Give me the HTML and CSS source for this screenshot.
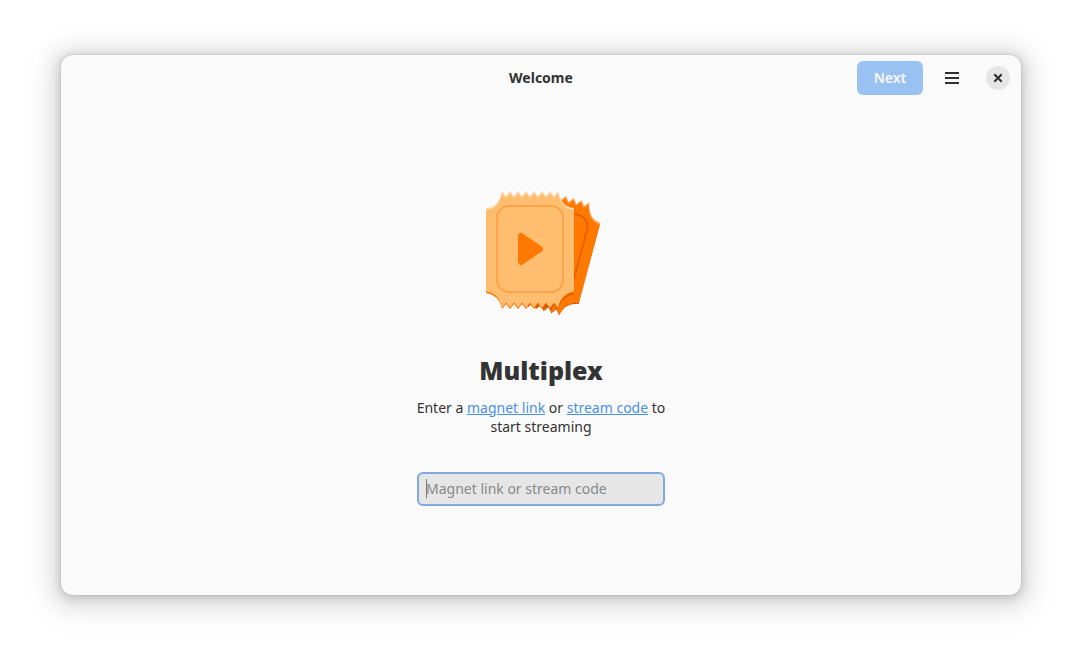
FILE: index.html
```html
<!DOCTYPE html>
<html lang="en">
<head>
<meta charset="utf-8">
<title>Multiplex</title>
<link rel="stylesheet" href="styles.css">
</head>
<body>
<div class="window">
  <header class="headerbar">
    <h2 class="title">Welcome</h2>
    <div class="actions">
      <button class="next" type="button" disabled>Next</button>
      <button class="menu" type="button" aria-label="Main menu">
        <svg width="16" height="16" viewBox="0 0 16 16"><path d="M1 2h14v2H1zM1 7h14v2H1zM1 12h14v2H1z" fill="#2f2f2f"/></svg>
      </button>
      <button class="close" type="button" aria-label="Close">
        <svg width="16" height="16" viewBox="0 0 16 16"><path d="M5 5l6 6M11 5l-6 6" stroke="#2f2f2f" stroke-width="2" stroke-linecap="square"/></svg>
      </button>
    </div>
  </header>
  <main class="content">
    <svg class="logo" width="128" height="128" viewBox="477 189 128 128" aria-hidden="true">
      <defs>
        <path id="ticket" d="M486 208Q499 207 502 191L506 196L510 191L514 196L518 191L522 196L526 191L530 196L534 191L538 196L542 191L546 196L550 191L554 196L558 191Q561 207 574 208V291Q561 293 558 307L554 302L550 307L546 302L542 307L538 302L534 307L530 302L526 307L522 302L518 307L514 302L510 307L506 302L502 307Q499 293 486 291Z"/>
        <clipPath id="front"><use href="#ticket"/></clipPath>
        <clipPath id="back"><use href="#ticket" transform="translate(17 2) rotate(15 530 250)"/></clipPath>
        <clipPath id="visible"><path d="M560 189H605V317H520V250H560Z"/></clipPath>
      </defs>
      <g clip-path="url(#visible)">
        <g transform="translate(17 2) rotate(15 530 250)">
          <use href="#ticket" y="1" fill="#c64600"/>
          <use href="#ticket" fill="#ffa860"/>
          <g clip-path="url(#front)">
            <use href="#ticket" y="2" fill="#ff7800"/>
            <path d="M486 288h88v24h-88z" fill="#ff7800"/>
            <rect x="497" y="206" width="66" height="86" rx="12" fill="none" stroke="#e66100" stroke-width="2"/>
          </g>
        </g>
        <g clip-path="url(#back)"><path d="M574 291Q561 293 558 307L554 302L550 309L546 304L542 309L538 304L534 309L526 309V280H574Z" transform="translate(0 3)" fill="#c65400"/></g>
      </g>
      <use href="#ticket" y="2" fill="#ff7800"/>
      <use href="#ticket" fill="#ffdbb6"/>
      <g clip-path="url(#front)">
        <use href="#ticket" y="2" fill="#ffbe6f"/>
        <path d="M486 288h88v24h-88z" fill="#ffbe6f"/>
      </g>
      <rect x="497" y="206" width="66" height="86" rx="12" fill="none" stroke="#ffa348" stroke-width="2"/>
      <path d="M521 236V262L540 249Z" fill="#ff7800" stroke="#ff7800" stroke-width="6" stroke-linejoin="round"/>
    </svg>
    <h1 class="name">Multiplex</h1>
    <p class="intro">Enter a <a href="#magnet">magnet link</a> or <a href="#stream">stream code</a> to start streaming</p>
    <input class="entry" type="text" aria-label="Magnet link or stream code" placeholder="Magnet link or stream code">
  </main>
</div>
</body>
</html>
```
FILE: styles.css
```css
* {
  box-sizing: border-box;
}

body {
  margin: 0;
  min-height: 100vh;
  padding: 55px 61px 67px;
  display: flex;
  background: #fff;
  color: #333;
  font: 14px/19px "Noto Sans", "Open Sans", sans-serif;
}

.window {
  flex: 1;
  display: flex;
  flex-direction: column;
  background: #fafafa;
  border-radius: 12px;
  box-shadow: 0 0 0 1px rgba(0, 0, 0, 0.05), 0 2px 8px 2px rgba(0, 0, 0, 0.13), 0 3px 20px 10px rgba(0, 0, 0, 0.09), 0 6px 32px 16px rgba(0, 0, 0, 0.04);
}

.headerbar {
  display: grid;
  grid-template-columns: 1fr auto 1fr;
  align-items: center;
  padding: 6px 11px;
}

.title {
  grid-column: 2;
  margin: 0;
  padding-bottom: 2px;
  font-size: 14px;
  font-weight: 700;
}

.actions {
  display: flex;
  align-items: center;
  justify-content: flex-end;
}

button {
  border: 0;
  padding: 0;
  color: inherit;
  font: inherit;
  display: grid;
  place-items: center;
}

.next {
  width: 66px;
  height: 34px;
  padding-bottom: 2px;
  border-radius: 6px;
  background: #99c1f1;
  color: #fafafa;
  font-weight: 600;
}

.menu {
  width: 34px;
  height: 34px;
  margin: 0 17px 0 12px;
  background: transparent;
}

.close {
  width: 24px;
  height: 24px;
  border-radius: 50%;
  background: #e6e6e6;
}

.content {
  flex: 1;
  display: flex;
  flex-direction: column;
  align-items: center;
  justify-content: center;
  padding-bottom: 2px;
}

.logo {
  display: block;
}

.name {
  margin: 35px 0 0;
  font-size: 25px;
  font-weight: 900;
  line-height: 36px;
}

.intro {
  width: 100%;
  max-width: 260px;
  margin: 10px 0 36px;
  text-align: center;
}

.intro a {
  color: #4a90e2;
}

.entry {
  width: 248px;
  height: 34px;
  padding: 0 7px;
  border: 2px solid #7eaae0;
  border-radius: 6px;
  outline: 0;
  background: linear-gradient(#777, #777) 7px center / 1px 19px no-repeat #e6e6e6;
  color: #333;
  font: inherit;
}

.entry::placeholder {
  color: #888;
}
```
